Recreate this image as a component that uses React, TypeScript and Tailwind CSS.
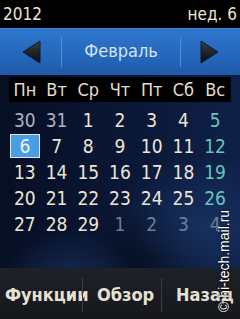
const days: { d: number; kind: "prev" | "cur" | "next" }[][] = [
  [
    { d: 30, kind: "prev" },
    { d: 31, kind: "prev" },
    { d: 1, kind: "cur" },
    { d: 2, kind: "cur" },
    { d: 3, kind: "cur" },
    { d: 4, kind: "cur" },
    { d: 5, kind: "cur" },
  ],
  [6, 7, 8, 9, 10, 11, 12].map((d) => ({ d, kind: "cur" as const })),
  [13, 14, 15, 16, 17, 18, 19].map((d) => ({ d, kind: "cur" as const })),
  [20, 21, 22, 23, 24, 25, 26].map((d) => ({ d, kind: "cur" as const })),
  [
    { d: 27, kind: "cur" },
    { d: 28, kind: "cur" },
    { d: 29, kind: "cur" },
    { d: 1, kind: "next" },
    { d: 2, kind: "next" },
    { d: 3, kind: "next" },
    { d: 4, kind: "next" },
  ],
];

const weekdays = ["Пн", "Вт", "Ср", "Чт", "Пт", "Сб", "Вс"];

const Arrow = ({ dir }: { dir: "left" | "right" }) => (
  <svg width="19" height="24" viewBox="0 0 19 24">
    <defs>
      <linearGradient id={`ag-${dir}`} x1="0" y1="0" x2="0" y2="1">
        <stop offset="0" stopColor="#3a3f48" />
        <stop offset="1" stopColor="#07090c" />
      </linearGradient>
    </defs>
    {dir === "left" ? (
      <path d="M18 1 L18 23 L1 12 Z" fill={`url(#ag-${dir})`} stroke="#0b1c33" strokeWidth="1" strokeLinejoin="round" />
    ) : (
      <path d="M1 1 L1 23 L18 12 Z" fill={`url(#ag-${dir})`} stroke="#0b1c33" strokeWidth="1" strokeLinejoin="round" />
    )}
  </svg>
);

export default function App() {
  return (
    <div className="relative flex h-[319px] w-[240px] flex-col overflow-hidden bg-black font-['DejaVu_Sans',sans-serif] [font-stretch:condensed]">
      {/* status line */}
      <div className="flex h-[28px] items-center justify-between pl-[3px] pr-[3px] text-[17px] leading-none text-[#e9e4d6]">
        <span>2012</span>
        <span>нед. 6</span>
      </div>

      {/* month header */}
      <div className="flex h-[47px] items-center bg-[linear-gradient(#2f78cf,#2566bb_60%,#1f5aa8)] shadow-[inset_0_1px_0_#3f86d6]">
        <div className="flex w-[61px] justify-center pl-[2px]">
          <Arrow dir="left" />
        </div>
        <div className="h-[30px] w-px bg-[#4f8fd6]" />
        <div className="flex-1 pb-[2px] text-center text-[18px] text-[#d4e2f2]">Февраль</div>
        <div className="h-[30px] w-px bg-[#4f8fd6]" />
        <div className="flex w-[59px] justify-center pr-[2px]">
          <Arrow dir="right" />
        </div>
      </div>

      {/* calendar */}
      <div className="flex h-[193px] flex-col bg-[#09132b] bg-[radial-gradient(ellipse_70px_60px_at_70px_215px,#172e5c,transparent),radial-gradient(ellipse_90px_70px_at_205px_150px,#17305f,transparent),radial-gradient(ellipse_60px_50px_at_150px_180px,#050c1a,transparent),linear-gradient(90deg,#070f24,#0b1838_60%,#0f2048)] pt-[2px]">
        <div className="mx-[9px] grid h-[25px] grid-cols-7 items-center bg-black text-[18px] leading-none text-[#e2ddcc]">
          {weekdays.map((w) => (
            <span key={w} className="text-center">
              {w}
            </span>
          ))}
        </div>
        <div className="mx-[9px] mt-[5px] flex flex-col">
          {days.map((row, r) => (
            <div key={r} className="grid h-[26px] grid-cols-7 items-center">
              {row.map((c, i) => {
                const selected = r === 1 && i === 0;
                const color =
                  c.kind === "prev"
                    ? "text-[#a9b2c2]"
                    : c.kind === "next"
                      ? "text-[#6f7e96]"
                      : i === 6
                        ? "text-[#63c7bd]"
                        : "text-[#ece6d5]";
                return (
                  <div key={i} className="flex justify-center">
                    {selected ? (
                      <span className="flex h-[24px] w-[30px] items-center justify-center border border-[#dbe9f5] bg-[#4a9de0] text-[19px] leading-none text-[#eef4fa]">
                        {c.d}
                      </span>
                    ) : (
                      <span className={`text-[19px] leading-none ${color}`}>{c.d}</span>
                    )}
                  </div>
                );
              })}
            </div>
          ))}
        </div>
      </div>

      {/* softkeys */}
      <div className="flex flex-1 items-center bg-[linear-gradient(#1e2127,#15171b)] pt-[2px] text-[18px] font-bold leading-none text-[#e6e1d4]">
        <div className="w-[82px] pl-[5px]">Функции</div>
        <div className="h-[34px] w-px bg-[#3a3d44]" />
        <div className="w-[78px] pl-[14px]">Обзор</div>
        <div className="h-[34px] w-px bg-[#3a3d44]" />
        <div className="pl-[14px]">Назад</div>
      </div>

      {/* watermark */}
      <div className="absolute left-[217px] top-[312px] origin-top-left -rotate-90 whitespace-nowrap font-['Liberation_Sans',sans-serif] text-[14px] leading-none text-white [font-stretch:normal] [text-shadow:0_0_2px_#000,0_0_1px_#000]">
        © hi-tech.mail.ru
      </div>
    </div>
  );
}
